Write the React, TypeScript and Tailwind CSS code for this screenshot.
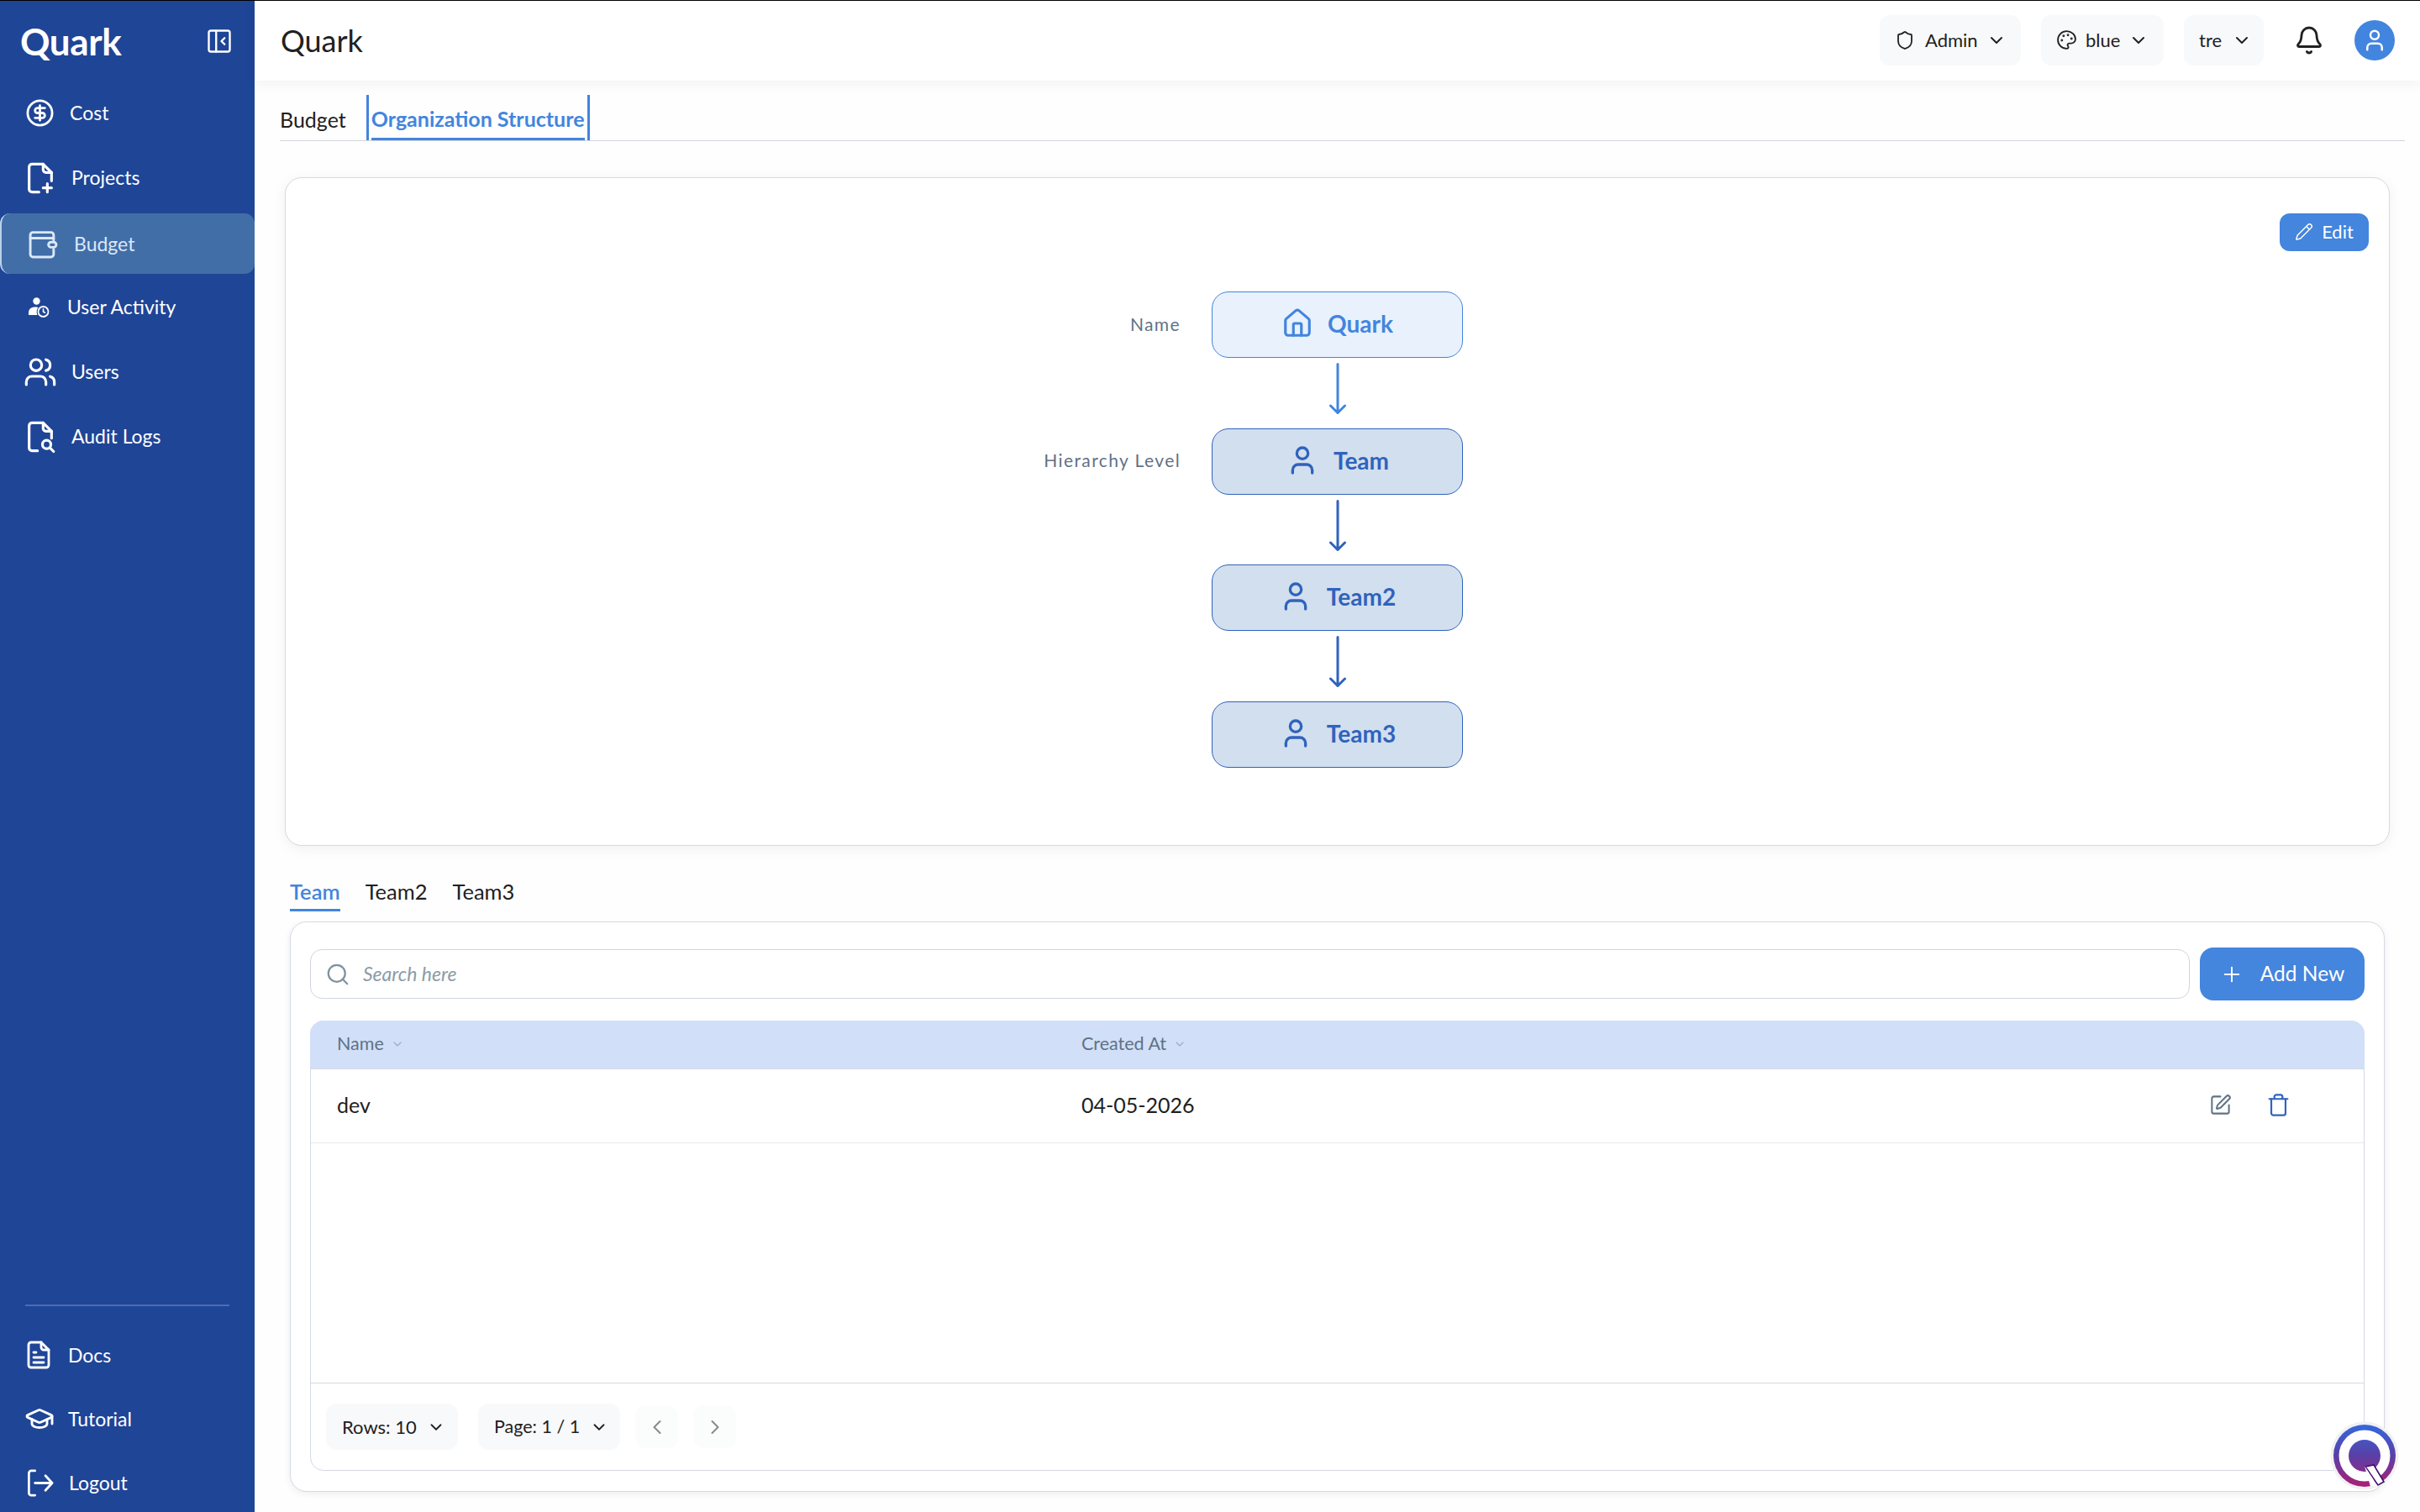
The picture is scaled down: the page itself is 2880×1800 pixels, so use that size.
import React from "react";
import {
  CircleDollarSign,
  Users,
  Shield,
  Palette,
  ChevronDown,
  ChevronLeft,
  ChevronRight,
  Bell,
  User,
  Pencil,
  Home,
  Search,
  Plus,
  SquarePen,
  Trash,
  GraduationCap,
} from "lucide-react";

const S = ({ className, children }: { className: string; children: React.ReactNode }) => (
  <svg viewBox="0 0 24 24" fill="none" stroke="currentColor" strokeWidth={1.9} strokeLinecap="round" strokeLinejoin="round" className={className}>
    {children}
  </svg>
);

const ProjectsIcon = ({ className }: { className: string }) => (
  <S className={className}>
    <path d="M11 22H6a2 2 0 0 1-2-2V4a2 2 0 0 1 2-2h8l6 6v6" />
    <path d="M14 2v4a2 2 0 0 0 2 2h4" />
    <path d="M17 16v6M14 19h6" />
  </S>
);
const WalletIcon = ({ className }: { className: string }) => (
  <S className={className}>
    <path d="M20 9V5a2 2 0 0 0-2-2H4a2 2 0 0 0-2 2v15a2 2 0 0 0 2 2h14a2 2 0 0 0 2-2v-4" />
    <path d="M2 7.500h18" />
    <rect x="16" y="10.500" width="6" height="4" rx="2" />
  </S>
);
const UserClockIcon = ({ className }: { className: string }) => (
  <svg viewBox="0 0 26 24" className={className} fill="none">
    <circle cx="10.500" cy="4.500" r="4.200" fill="currentColor" />
    <path d="M1 21v-2.500C1 14 4 11.500 9 11.500c2.500 0 3.500.5 3.500.5-2 2.500-2.500 6-1 9z" fill="currentColor" />
    <circle cx="18.500" cy="17" r="6" stroke="currentColor" strokeWidth="1.800" />
    <path d="M18.500 13.800V17l2 1.200" stroke="currentColor" strokeWidth="1.600" strokeLinecap="round" />
  </svg>
);
const AuditIcon = ({ className }: { className: string }) => (
  <S className={className}>
    <path d="M10 22H6a2 2 0 0 1-2-2V4a2 2 0 0 1 2-2h8l6 6v5" />
    <path d="M14 2v4a2 2 0 0 0 2 2h4" />
    <circle cx="16.500" cy="17.500" r="3" />
    <path d="m19 20 2.500 2.500" />
  </S>
);
const DocsIcon = ({ className }: { className: string }) => (
  <S className={className}>
    <path d="M14 2H6a2 2 0 0 0-2 2v16a2 2 0 0 0 2 2h12a2 2 0 0 0 2-2V8z" />
    <path d="M14 2v4a2 2 0 0 0 2 2h4" />
    <path d="M8 10h2M8 14h8M8 18h8" />
  </S>
);
const LogoutIcon = ({ className }: { className: string }) => (
  <S className={className}>
    <path d="M8 2H5a2 2 0 0 0-2 2v16a2 2 0 0 0 2 2h3" />
    <path d="M8 12h14M16.500 6l5.500 6-5.500 6" />
  </S>
);
const CollapseIcon = ({ className }: { className: string }) => (
  <S className={className}>
    <rect x="2" y="2" width="20" height="20" rx="2" />
    <path d="M9 2v20M17 9l-3 3 3 3" />
  </S>
);
const ArrowIcon = ({ className }: { className: string }) => (
  <svg viewBox="0 0 20 61" fill="none" stroke="currentColor" strokeWidth={3} strokeLinecap="round" strokeLinejoin="round" className={className}>
    <path d="M10 1.500v58M1.500 51 10 59.500l8.500-8.500" />
  </svg>
);
const LogoIcon = ({ className }: { className: string }) => (
  <svg viewBox="0 0 82 82" className={className}>
    <defs>
      <linearGradient id="q" gradientUnits="userSpaceOnUse" x1="41" y1="4" x2="41" y2="78">
        <stop offset="0" stopColor="#3468dc" />
        <stop offset="0.5" stopColor="#5a3fa6" />
        <stop offset="1" stopColor="#ab1f74" />
      </linearGradient>
    </defs>
    <circle cx="41" cy="41" r="40.500" fill="#f1f1f2" />
    <circle cx="41" cy="41" r="37" fill="url(#q)" />
    <circle cx="41" cy="41" r="30.500" fill="#fff" />
    <circle cx="41" cy="41" r="19" fill="url(#q)" />
    <polygon points="42,54 57,76 64,72 52,52" fill="#fff" stroke="#3f1070" strokeWidth="1.600" />
    <polygon points="41,53.200 56.500,77 48,77.500" fill="#fff" />
  </svg>
);

const nav = [
  { label: "Cost", Icon: CircleDollarSign, box: "pl-[30px] gap-[18px]", icon: "w-[35px] h-[35px]" },
  { label: "Projects", Icon: ProjectsIcon, box: "pl-[28px] gap-[17px]", icon: "w-[40px] h-[40px]" },
  { label: "Budget", Icon: WalletIcon, box: "pl-[31px] gap-[18px]", icon: "w-[37px] h-[37px]" },
  { label: "User Activity", Icon: UserClockIcon, box: "pl-[33px] gap-[21px]", icon: "w-[26px] h-[24px]" },
  { label: "Users", Icon: Users, box: "pl-[28px] gap-[17px]", icon: "w-[40px] h-[40px]" },
  { label: "Audit Logs", Icon: AuditIcon, box: "pl-[28px] gap-[17px]", icon: "w-[40px] h-[40px]" },
];

const Select = ({ children, className }: { children: React.ReactNode; className: string }) => (
  <div className={"flex items-center rounded-[12px] bg-[#f8f9fb] text-[#212121] " + className}>{children}</div>
);

const Node = ({ label, tone, Icon, name, icon }: { label?: string; tone: "light" | "dark"; Icon: React.ElementType; name: string; icon: string }) => (
  <>
    <div className="pb-[2px] pr-[37px] text-right text-[21px] tracking-[1.4px] text-[#5f7285]">{label}</div>
    <div
      className={
        tone === "light"
          ? "flex h-[79px] items-center justify-center gap-[17px] rounded-[20px] border-[1.5px] border-[#4285de] bg-[#e8f1fc] pb-[3px] text-[#4285de]"
          : "flex h-[79px] items-center justify-center gap-[17px] rounded-[20px] border-[1.5px] border-[#2f63bd] bg-[#d2dfee] pb-[3px] text-[#2f63bd]"
      }
    >
      <Icon className={icon} strokeWidth={2} />
      <span className="text-[28px] font-bold">{name}</span>
    </div>
    <div />
  </>
);

const Connector = ({ className }: { className: string }) => (
  <>
    <div />
    <div className={"flex h-[83.5px] items-start justify-center pt-[6px] " + className}>
      <ArrowIcon className="h-[61px] w-[20px]" />
    </div>
    <div />
  </>
);

export default function App() {
  return (
    <div className="flex h-[1800px] w-[2880px] flex-col overflow-hidden bg-white text-[#212121] [font-family:'Lato','Liberation_Sans',sans-serif]">
      <div className="h-px bg-black" />
      <div className="flex min-h-0 flex-1">
        <aside className="flex w-[303px] shrink-0 flex-col bg-[#1f4597] text-white">
          <div className="flex h-[95px] shrink-0 items-center justify-between pl-[24px] pr-[27px]">
            <span className="text-[44px] font-bold leading-none tracking-[-0.4px]">Quark</span>
            <CollapseIcon className="h-[30px] w-[30px]" />
          </div>
          <nav className="flex flex-col">
            {nav.map(({ label, Icon, box, icon }) => (
              <div
                key={label}
                className={
                  label === "Budget"
                    ? "mb-[1px] mt-[4px] flex h-[72px] items-center rounded-[12px] border-l-2 border-[#bcd0ea] bg-[#426ea8] text-[#dbe8f8] " + box
                    : "flex h-[77px] items-center " + box
                }
              >
                <Icon className={icon + " shrink-0"} strokeWidth={1.9} />
                <span className="text-[23px] leading-none">{label}</span>
              </div>
            ))}
          </nav>
          <div className="mt-auto px-[30px]">
            <div className="h-[2px] bg-[#4e6cac]" />
          </div>
          <div className="-mb-[3px] flex flex-col pt-[20px]">
            <div className="flex h-[76px] items-center gap-[17px] pl-[28px]">
              <DocsIcon className="h-[36px] w-[36px]" />
              <span className="text-[23px]">Docs</span>
            </div>
            <div className="flex h-[76px] items-center gap-[16px] pl-[29px]">
              <GraduationCap className="h-[36px] w-[36px]" strokeWidth={1.9} />
              <span className="text-[23px]">Tutorial</span>
            </div>
            <div className="flex h-[76px] items-center gap-[17px] pl-[30px]">
              <LogoutIcon className="h-[35px] w-[35px]" />
              <span className="text-[23px]">Logout</span>
            </div>
          </div>
        </aside>

        <main className="relative flex min-w-0 flex-1 flex-col bg-[#fefefe]">
          <header className="relative z-10 flex h-[95px] shrink-0 items-center bg-white pb-[2px] pl-[31px] pr-[30px] shadow-[0_3px_16px_rgba(0,0,0,0.06)]">
            <span className="text-[36px] leading-none">Quark</span>
            <div className="ml-auto flex items-center">
              <Select className="h-[60px] w-[168px] pl-[18px] text-[22px]">
                <Shield className="h-[24px] w-[24px]" strokeWidth={1.8} />
                <span className="ml-[12px]">Admin</span>
                <ChevronDown className="ml-[10px] h-[24px] w-[24px]" strokeWidth={2} />
              </Select>
              <Select className="ml-[24px] h-[60px] w-[146px] pl-[18px] text-[22px]">
                <Palette className="h-[25px] w-[25px]" strokeWidth={1.8} />
                <span className="ml-[10px]">blue</span>
                <ChevronDown className="ml-[10px] h-[24px] w-[24px]" strokeWidth={2} />
              </Select>
              <Select className="ml-[24px] h-[60px] w-[95px] pl-[18px] text-[22px]">
                <span>tre</span>
                <ChevronDown className="ml-[12px] h-[24px] w-[24px]" strokeWidth={2} />
              </Select>
              <Bell className="ml-[36px] h-[36px] w-[36px] text-[#212121]" strokeWidth={1.9} />
              <div className="ml-[36px] flex h-[48px] w-[48px] items-center justify-center rounded-full bg-[#4285de] text-white">
                <User className="h-[30px] w-[30px]" strokeWidth={2} />
              </div>
            </div>
          </header>

          <div className="ml-[30px] mr-[18px] flex h-[72px] shrink-0 items-end border-b border-[#d1d5de]">
            <div className="flex h-[54px] items-center pr-[24px] pt-[6px] text-[25px]">Budget</div>
            <div className="flex h-[54px] items-center border-x-[3px] border-[#4285de] px-[3px]">
              <span className="flex h-full items-center border-b-[3px] border-[#4285de] pt-[7px] text-[25px] font-bold text-[#4285de]">Organization Structure</span>
            </div>
          </div>

          <section className="ml-[36px] mr-[36px] mt-[43px] h-[796px] shrink-0 rounded-[20px] border border-[#d5d9e3] bg-white shadow-[0_3px_16px_rgba(0,0,0,0.06)]">
            <div className="flex justify-end pr-[24px] pt-[42px]">
              <button className="flex h-[45px] w-[106px] items-center justify-center gap-[10px] rounded-[12px] bg-[#4485de] pb-[2px] text-[22px] text-white">
                <Pencil className="h-[22px] w-[22px]" strokeWidth={1.6} />
                Edit
              </button>
            </div>
            <div className="mt-[48px] grid grid-cols-[1fr_299px_1fr] items-center">
              <Node label="Name" tone="light" Icon={Home} name="Quark" icon="h-[38px] w-[38px]" />
              <Connector className="text-[#4285de]" />
              <Node label="Hierarchy Level" tone="dark" Icon={User} name="Team" icon="h-[40px] w-[40px]" />
              <Connector className="text-[#2f63bd]" />
              <Node tone="dark" Icon={User} name="Team2" icon="h-[40px] w-[40px]" />
              <Connector className="text-[#2f63bd]" />
              <Node tone="dark" Icon={User} name="Team3" icon="h-[40px] w-[40px]" />
            </div>
          </section>

          <div className="ml-[42px] mt-[33px] flex h-[45px] shrink-0 gap-[30px] text-[25.500px]">
            <div className="flex h-full items-center border-b-[3px] border-[#4285de] font-semibold text-[#4285de]">Team</div>
            <div className="flex h-full items-center pb-[3px]">Team2</div>
            <div className="flex h-full items-center pb-[3px]">Team3</div>
          </div>

          <div className="ml-[36px] mt-[12px] w-[2505px] overflow-hidden pb-[7px] pl-[6px] pr-[6px]">
            <section className="flex h-[679px] flex-col rounded-[20px] border border-[#d5d9e3] bg-white px-[23px] pb-[24px] pt-[30px] shadow-[0_2px_10px_rgba(0,0,0,0.07)]">
              <div className="flex items-center gap-[12px]">
                <div className="flex h-[59px] flex-1 items-center rounded-[14px] border border-[#d1d5de] pl-[17px]">
                  <Search className="h-[30px] w-[30px] text-[#7f929e]" strokeWidth={1.8} />
                  <span className="ml-[15px] text-[23px] italic text-[#8b9ca8]">Search here</span>
                </div>
                <button className="flex h-[63px] w-[196px] items-center justify-center gap-[20px] rounded-[16px] bg-[#4485de] text-[24.500px] text-white">
                  <Plus className="h-[28px] w-[28px]" strokeWidth={1.7} />
                  Add New
                </button>
              </div>
              <div className="mt-[24px] flex min-h-0 flex-1 flex-col rounded-[16px] border border-[#d5d9e3]">
                <div className="-mx-px -mt-px flex h-[58px] shrink-0 items-center rounded-t-[16px] border-b border-[#d5d9e3] bg-[#d1dff8] pb-[2px] pl-[32px] text-[21.500px] text-[#5f7285]">
                  <div className="flex w-[886px] items-center gap-[8px]">
                    Name
                    <ChevronDown className="h-[16px] w-[16px] text-[#9aa9bc]" strokeWidth={1.6} />
                  </div>
                  <div className="flex items-center gap-[8px]">
                    Created At
                    <ChevronDown className="h-[16px] w-[16px] text-[#9aa9bc]" strokeWidth={1.6} />
                  </div>
                </div>
                <div className="flex h-[88px] shrink-0 items-center border-b border-[#e8eaef] pb-[2px] pl-[31px] pr-[87px] text-[25px]">
                  <div className="w-[886px]">dev</div>
                  <div>04-05-2026</div>
                  <SquarePen className="ml-auto h-[27px] w-[27px] text-[#5f7285]" strokeWidth={1.8} />
                  <Trash className="ml-[41px] h-[29px] w-[29px] text-[#2f63bd]" strokeWidth={1.8} />
                </div>
                <div className="flex-1" />
                <div className="flex h-[104px] shrink-0 items-center border-t border-[#d5d9e3] pl-[18px]">
                  <Select className="h-[55px] w-[157px] pl-[19px] text-[22px]">
                    <span>Rows: 10</span>
                    <ChevronDown className="ml-[12px] h-[22px] w-[22px]" strokeWidth={2} />
                  </Select>
                  <Select className="ml-[24px] h-[55px] w-[169px] pl-[19px] text-[21.500px]">
                    <span>Page: 1 / 1</span>
                    <ChevronDown className="ml-[12px] h-[22px] w-[22px]" strokeWidth={2} />
                  </Select>
                  <button className="ml-[18px] flex h-[51px] w-[51px] items-center justify-center rounded-[12px] bg-[#fbfcfc] text-[#8a8a8a]">
                    <ChevronLeft className="h-[28px] w-[28px]" strokeWidth={1.8} />
                  </button>
                  <button className="ml-[18px] flex h-[51px] w-[51px] items-center justify-center rounded-[12px] bg-[#fbfcfc] text-[#8a8a8a]">
                    <ChevronRight className="h-[28px] w-[28px]" strokeWidth={1.8} />
                  </button>
                </div>
              </div>
            </section>
          </div>
        </main>
      </div>
      <LogoIcon className="absolute left-[2773px] top-[1692px] h-[82px] w-[82px]" />
    </div>
  );
}
